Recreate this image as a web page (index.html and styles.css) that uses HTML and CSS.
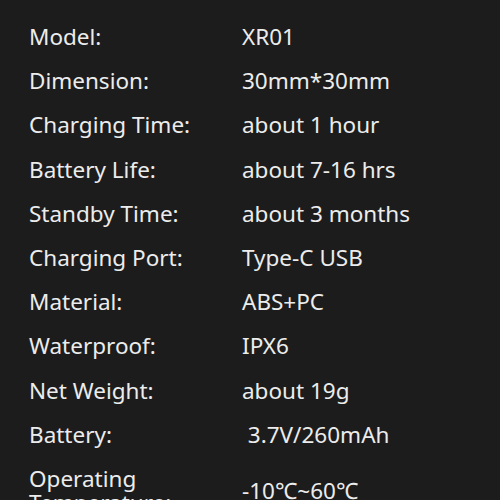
FILE: index.html
```html
<!DOCTYPE html>
<html>
<head>
<meta charset="utf-8">
<link rel="stylesheet" href="styles.css">
</head>
<body>
<div class="specs">
  <div class="row"><div class="label">Model:</div><div class="value">XR01</div></div>
  <div class="row"><div class="label">Dimension:</div><div class="value">30mm*30mm</div></div>
  <div class="row"><div class="label">Charging Time:</div><div class="value">about 1 hour</div></div>
  <div class="row"><div class="label">Battery Life:</div><div class="value">about 7-16 hrs</div></div>
  <div class="row"><div class="label">Standby Time:</div><div class="value">about 3 months</div></div>
  <div class="row"><div class="label">Charging Port:</div><div class="value">Type-C USB</div></div>
  <div class="row"><div class="label">Material:</div><div class="value">ABS+PC</div></div>
  <div class="row"><div class="label">Waterproof:</div><div class="value">IPX6</div></div>
  <div class="row"><div class="label">Net Weight:</div><div class="value">about 19g</div></div>
  <div class="row"><div class="label">Battery:</div><div class="value">&nbsp;3.7V/260mAh</div></div>
  <div class="row"><div class="label">Operating Temperature:</div><div class="value">-10℃~60℃</div></div>
</div>
</body>
</html>
```
FILE: styles.css
```css
html, body {
  margin: 0;
  background: #1c1c1c;
}
body {
  padding: 15px 0 0 29px;
  font-family: "Noto Sans", "Noto Sans CJK SC", sans-serif;
  color: #ececec;
  font-size: 22.5px;
  line-height: 24px;
}
.specs {
  display: flex;
  flex-direction: column;
}
.row {
  display: grid;
  grid-template-columns: 213px 1fr;
  align-items: center;
  padding: 10.1px 0;
}
```
